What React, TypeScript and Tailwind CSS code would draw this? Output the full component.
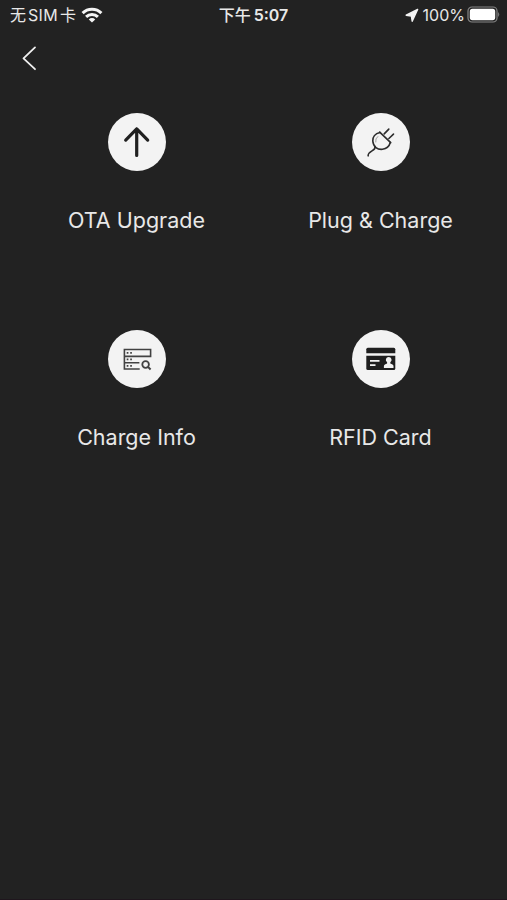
import type { ReactNode } from "react";

interface MenuItem {
  label: string;
  icon: ReactNode;
}

const menuItems: MenuItem[] = [
  { label: "OTA Upgrade", icon: <UpgradeIcon /> },
  { label: "Plug & Charge", icon: <PlugIcon /> },
  { label: "Charge Info", icon: <ChargeInfoIcon /> },
  { label: "RFID Card", icon: <CardIcon /> },
];

export default function App() {
  return (
    <div className="flex h-[900px] w-[507px] flex-col overflow-hidden border-b border-[#1f161d] bg-[#222222] font-['Inter','Noto_Sans_CJK_SC',sans-serif] text-[#e8e8e8]">
      <StatusBar />
      <header className="flex h-14 items-center pl-[21px]">
        <button aria-label="Back">
          <svg width="16" height="26" viewBox="0 0 16 26" fill="none" stroke="#f0f0f0" strokeWidth="1.8" strokeLinecap="round" strokeLinejoin="round">
            <path d="M14 2.4 2.5 13.4 14 24.2" />
          </svg>
        </button>
      </header>
      <main className="grid grid-cols-[244px_244px] pt-[26.6px] pl-[14.5px]">
        {menuItems.map((item) => (
          <button key={item.label} className="flex h-[217px] flex-col items-center">
            <span className="size-[58px] rounded-full bg-[#f3f3f3]">{item.icon}</span>
            <span className="mt-[33.4px] text-[21.5px] leading-8 whitespace-nowrap">{item.label}</span>
          </button>
        ))}
      </main>
    </div>
  );
}

function StatusBar() {
  return (
    <div className="grid h-[30px] grid-cols-[1fr_auto_1fr] items-center pr-[7px] pl-[10px] text-[16px] leading-none">
      <div className="flex items-center">
        <span className="whitespace-nowrap">
          无<span className="mx-[2px] tracking-[0.3px]">SIM</span>卡
        </span>
        <svg className="ml-[5px]" width="22" height="16" viewBox="0 0 22 16" fill="none" stroke="#f4f4f4" strokeWidth="3">
          <path d="M1.6 6.1a13.2 13.2 0 0 1 18.8 0" />
          <path d="M5.1 9.9a8.4 8.4 0 0 1 11.8 0" />
          <path d="M11 15.6 7.8 12.4a4.6 4.6 0 0 1 6.4 0z" fill="#f4f4f4" stroke="none" />
        </svg>
      </div>
      <div className="pr-[3px] font-semibold whitespace-nowrap">
        <span className="font-medium">下午</span>
        <span className="ml-[3px]">5:07</span>
      </div>
      <div className="flex items-center justify-end">
        <svg width="14" height="14" viewBox="0 0 14 14" fill="#f4f4f4" stroke="#f4f4f4" strokeWidth="1.4" strokeLinejoin="round">
          <path d="M12.6 1.4 1.2 7.2l5.2.9.8 5.1z" />
        </svg>
        <span className="ml-[4px]">100%</span>
        <svg className="ml-[2px]" width="33" height="18" viewBox="0 0 33 18">
          <rect x="1" y="1" width="29" height="15" rx="4" fill="none" stroke="#858585" strokeWidth="1.2" />
          <rect x="2.8" y="2.8" width="25.4" height="11.4" rx="2.6" fill="#fff" />
          <path d="M31.2 6q2 2.5 0 5z" fill="#858585" />
        </svg>
      </div>
    </div>
  );
}

function UpgradeIcon() {
  return (
    <svg viewBox="0.5 0.5 58 58" fill="none" stroke="#202020" strokeWidth="3.2" strokeLinecap="round" strokeLinejoin="round">
      <path d="M29.2 43V16.4M18.2 27.6 29.2 16.4 40.2 27.6" />
    </svg>
  );
}

function PlugIcon() {
  return (
    <svg viewBox="0.5 0.5 58 58" fill="none" stroke="#2c2c2c" strokeWidth="1.6" strokeLinecap="round" strokeLinejoin="round">
      <path d="M28.2 19.6 39.2 30.2" />
      <path d="M28.5 20C23.5 21.2 21 24.8 21.3 28.5C21.7 34.2 26 37.4 31 36.8C34.8 36.2 37.7 34 38.8 30" />
      <path d="M32.7 21.4 37.3 16.6M37.4 26 42 21.6" />
      <path d="M23.6 34.2C24 39 16.8 37.6 16.6 43.4" />
      <path d="M24.2 29.5Q23.6 26 26.3 24" strokeWidth="0.8" stroke="#8a8a8a" />
    </svg>
  );
}

function ChargeInfoIcon() {
  return (
    <svg viewBox="0.5 0.5 58 58" fill="none" stroke="#424242" strokeWidth="1.6">
      <path d="M16.9 26.9V20h26.2v6.9H16.9v12.6h15.3M16.9 33.2h15" />
      <path d="M19.2 23.4h1.7M22.7 23.4h1.7M19.2 29.9h1.7M22.7 29.9h1.7M19.2 36.4h1.7M22.7 36.4h1.7" />
      <circle cx="38.1" cy="35" r="3.3" strokeWidth="1.8" />
      <path d="m40.5 37.4 2.6 2.6" strokeWidth="2" />
    </svg>
  );
}

function CardIcon() {
  return (
    <svg viewBox="0.5 0.5 58 58" fill="#1f1f1f">
      <path d="M16.3 18.3h26q1.5 0 1.5 1.5v3.9h-29v-3.9q0-1.5 1.5-1.5z" />
      <path d="M14.8 26.3h29V39q0 1.5-1.5 1.5h-26q-1.5 0-1.5-1.5z" />
      <path d="M18.5 31.4h9.5M18.5 35.7h5.5" stroke="#f3f3f3" strokeWidth="1.8" />
      <path d="M37.2 27.5a2.9 2.9 0 0 1 1.6 5.3v1.1l2.2 1q1 .5 1 1.7v2h-9.6v-2q0-1.2 1-1.7l2.2-1v-1.1a2.9 2.9 0 0 1 1.6-5.3z" fill="#f3f3f3" />
    </svg>
  );
}
